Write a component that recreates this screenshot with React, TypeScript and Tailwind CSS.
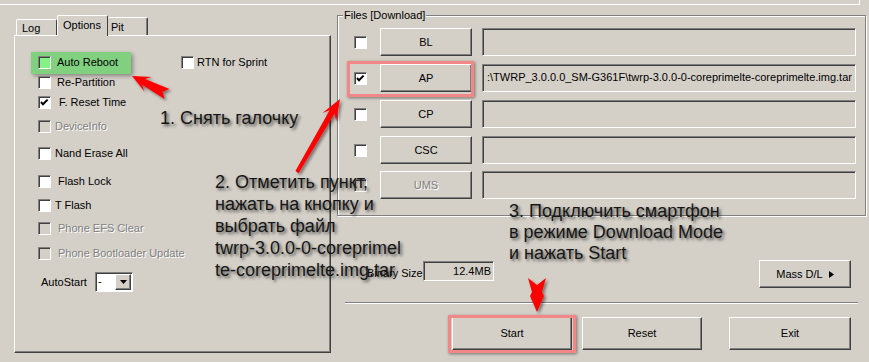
import React from 'react';

const raised =
  'border border-t-white border-l-white border-r-[#404040] border-b-[#404040] shadow-[inset_-1px_-1px_0_#808080]';
const sunken =
  'border border-t-[#808080] border-l-[#808080] border-r-white border-b-white shadow-[inset_1px_1px_0_#404040]';

function Check({ checked = false, disabled = false, green = false }) {
  return (
    <span
      className={`flex w-[13px] h-[13px] shrink-0 ${sunken} ${
        disabled ? 'bg-[#d4d0c8]' : green ? 'bg-[#84f284]' : 'bg-white'
      }`}
    >
      {checked && (
        <svg width="11" height="11" viewBox="0 0 11 11">
          <polyline points="2,5 4,7.3 8.6,2.6" fill="none" stroke="#000" strokeWidth="2" />
        </svg>
      )}
    </span>
  );
}

function Option({ label, gap, disabled = false, checked = false }: { label: string; gap: string; disabled?: boolean; checked?: boolean }) {
  return (
    <div className="flex h-[13px] items-center">
      <Check checked={checked} disabled={disabled} />
      <span className={`${gap} whitespace-nowrap ${disabled ? 'text-[#808080] [text-shadow:1px_1px_0_#fff]' : ''}`}>{label}</span>
    </div>
  );
}

function FileRow({ name, value = '', checked = false, disabled = false, hilite = false }: { name: string; value?: string; checked?: boolean; disabled?: boolean; hilite?: boolean }) {
  return (
    <div className="flex h-[28px] items-center">
      <div className="relative flex h-[28px] items-center">
        <Check checked={checked} disabled={disabled} />
        <button
          className={`ml-[13px] h-[28px] w-[92px] ${raised} ${
            disabled ? 'text-[#808080] [text-shadow:1px_1px_0_#fff]' : ''
          }`}
        >
          {name}
        </button>
        {hilite && (
          <span className="absolute -left-[7px] -top-[3px] h-[36px] w-[127px] border-[3px] border-[#f28787] shadow-[1px_1px_3px_rgba(0,0,0,0.45)]" />
        )}
      </div>
      <div className={`ml-[10px] h-[28px] w-[374px] overflow-hidden whitespace-nowrap pl-[4px] pt-[6px] ${sunken}`}>
        {value}
      </div>
    </div>
  );
}

export default function App() {
  return (
    <div className="relative h-[362px] w-[869px] overflow-hidden bg-[#d4d0c8] font-['Liberation_Sans',Arial,sans-serif] text-[11px] leading-[13px] text-black">
      <div className="h-[5px] w-[860px] border-b border-r border-white" />

      <div className="mt-[10px] flex">
        {/* left: options tab */}
        <div className="ml-[14px] flex w-[317px] flex-col">
          <div className="flex h-[20px] items-end pl-[2px]">
            <div className="h-[16px] w-[41px] rounded-t-[2px] border-l border-t border-white border-r border-r-[#404040] pl-[5px] pt-[2px]">
              Log
            </div>
            <div className="relative z-10 -mb-px h-[21px] w-[51px] rounded-t-[2px] border-l border-t border-white border-r border-r-[#404040] bg-[#d4d0c8] pl-[5px] pt-[3px]">
              Options
            </div>
            <div className="h-[18px] w-[40px] rounded-t-[2px] border-t border-white border-r border-r-[#404040] shadow-[inset_-1px_0_0_#808080] pl-[3px] pt-[3px]">
              Pit
            </div>
          </div>
          <div className={`flex h-[318px] flex-col pl-[23px] pt-[20px] ${raised}`}>
            <div className="flex h-[13px] items-center">
              <div className="-ml-[7px] flex h-[22px] w-[100px] items-center bg-[#80d080] pl-[7px] shadow-[2px_2px_4px_rgba(0,0,0,0.35)]">
                <Check green />
                <span className="ml-[6px]">Auto Reboot</span>
              </div>
              <div className="ml-[50px] flex items-center">
                <Check />
                <span className="ml-[3px]">RTN for Sprint</span>
              </div>
            </div>
            <div className="mt-[7px]"><Option label="Re-Partition" gap="ml-[6px]" /></div>
            <div className="mt-[7px]"><Option label="F. Reset Time" gap="ml-[8px]" checked /></div>
            <div className="mt-[11px]"><Option label="DeviceInfo" gap="ml-[4px]" disabled /></div>
            <div className="mt-[14px]"><Option label="Nand Erase All" gap="ml-[4px]" /></div>
            <div className="mt-[15px]"><Option label="Flash Lock" gap="ml-[7px]" /></div>
            <div className="mt-[11px]"><Option label="T Flash" gap="ml-[4px]" /></div>
            <div className="mt-[10px]"><Option label="Phone EFS Clear" gap="ml-[7px]" disabled /></div>
            <div className="mt-[12px]"><Option label="Phone Bootloader Update" gap="ml-[7px]" disabled /></div>
            <div className="mt-[12px] flex h-[20px] items-center">
              <span className="ml-[3px] w-[54px]">AutoStart</span>
              <div className={`flex h-[20px] w-[38px] bg-white ${sunken}`}>
                <span className="flex-1 pl-[2px] pt-[2px]">-</span>
                <span className={`mr-px mt-px flex h-[16px] w-[16px] items-center justify-center bg-[#d4d0c8] ${raised}`}>
                  <svg width="7" height="4" viewBox="0 0 7 4"><polygon points="0,0 7,0 3.5,4" fill="#000" /></svg>
                </span>
              </div>
            </div>
          </div>
        </div>

        {/* right: files */}
        <div className="ml-[6px] flex w-[529px] flex-col">
          <div className="relative flex flex-col gap-[8px] border border-[#808080] pb-[16px] pl-[16px] pt-[12px] shadow-[inset_1px_1px_0_#fff,1px_1px_0_#fff]">
            <span className="absolute -top-[7px] left-[5px] bg-[#d4d0c8] px-[1px]">Files [Download]</span>
            <FileRow name="BL" />
            <FileRow
              name="AP"
              checked
              hilite
              value={':\\TWRP_3.0.0.0_SM-G361F\\twrp-3.0.0-0-coreprimelte-coreprimelte.img.tar'}
            />
            <FileRow name="CP" />
            <FileRow name="CSC" />
            <div className="-mt-px">
              <FileRow name="UMS" disabled />
            </div>
          </div>

          <div className="mt-[44px] flex h-[28px] items-start">
            <span className="ml-[30px] mt-[7px] w-[56px] whitespace-nowrap">Binary Size</span>
            <div className={`mt-px h-[20px] w-[71px] pr-[2px] pt-[3px] text-right ${sunken}`}>12.4MB</div>
            <button className={`ml-auto mr-[15px] flex h-[28px] w-[92px] items-center justify-center gap-[6px] ${raised}`}>
              Mass D/L
              <svg width="5" height="7" viewBox="0 0 5 7"><polygon points="0,0 5,3.5 0,7" fill="#000" /></svg>
            </button>
          </div>

          <div className="mx-[8px] mt-[14px] h-[2px] border-b border-t border-b-white border-t-[#808080]" />

          <div className="mt-[13px] flex pl-[115px]">
            <button className={`relative h-[33px] w-[120px] ${raised}`}>
              Start
              <span className="absolute -bottom-[4px] -left-[5px] -right-[5px] -top-[3px] border-[3px] border-[#f28787] shadow-[1px_1px_3px_rgba(0,0,0,0.45)]" />
            </button>
            <button className={`ml-[10px] h-[33px] w-[120px] ${raised}`}>Reset</button>
            <button className={`ml-[27px] h-[33px] w-[122px] ${raised}`}>Exit</button>
          </div>
        </div>
      </div>

      {/* red arrows */}
      <svg className="pointer-events-none absolute left-0 top-0" width="869" height="362" viewBox="0 0 869 362">
        <defs>
          <filter id="sh" x="-20%" y="-20%" width="140%" height="140%">
            <feDropShadow dx="2" dy="2" stdDeviation="1.5" floodColor="#000" floodOpacity="0.45" />
          </filter>
        </defs>
        <g fill="#ff0000" filter="url(#sh)">
          <polygon points="132,76 151.7,77.1 145,79.1 169.5,89.1 162.6,91.7 164.5,98.9 142,84.7 144.3,91.3" />
          <polygon points="340,99 336.2,121.2 334.6,113.6 298.6,173.2 295.4,171 329.6,110.2 322.4,113" />
          <polygon points="528,278 537,285 546,278 542,292 544,296 537,312 530,296 532,292" />
        </g>
      </svg>

      {/* annotations */}
      <div className="absolute left-[160px] top-[108px] whitespace-nowrap text-[18px] leading-[20px] text-[#161616] [text-shadow:2px_2px_3px_rgba(0,0,0,0.6)]">
        1. Снять галочку
      </div>
      <div className="absolute left-[215px] top-[171px] whitespace-nowrap text-[18px] leading-[22px] text-[#161616] [text-shadow:2px_2px_3px_rgba(0,0,0,0.6)]">
        <div>2. Отметить пункт,</div>
        <div>нажать на кнопку и</div>
        <div>выбрать файл</div>
        <div>twrp-3.0.0-0-coreprimel</div>
        <div>te-coreprimelte.img.tar</div>
      </div>
      <div className="absolute left-[509px] top-[201px] whitespace-nowrap text-[18px] leading-[21px] text-[#161616] [text-shadow:2px_2px_3px_rgba(0,0,0,0.6)]">
        <div>3. Подключить смартфон</div>
        <div>в режиме Download Mode</div>
        <div>и нажать Start</div>
      </div>
    </div>
  );
}
